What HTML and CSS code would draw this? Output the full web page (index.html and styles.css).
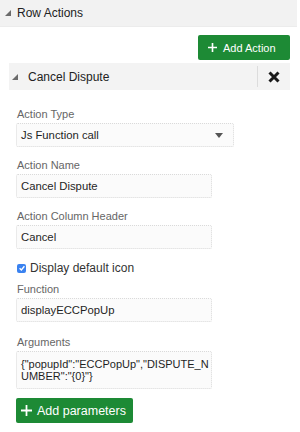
FILE: index.html
```html
<!DOCTYPE html>
<html>
<head>
<meta charset="utf-8">
<link rel="stylesheet" href="styles.css">
</head>
<body>
<div class="panel">
  <div class="section-header">
    <span class="tri"></span>
    <span class="section-title">Row Actions</span>
  </div>
  <div class="toolbar">
    <button class="btn btn-add-action"><svg class="plus" viewBox="0 0 10 10" width="9" height="9"><path d="M5 0V10M0 5H10" stroke="#fff" stroke-width="1.8"/></svg>Add Action</button>
  </div>
  <div class="item-header">
    <span class="tri"></span>
    <span class="item-title">Cancel Dispute</span>
    <span class="spacer"></span>
    <span class="close"><svg viewBox="0 0 12 12" width="12" height="12"><path d="M1.5 1.5L10.5 10.5M10.5 1.5L1.5 10.5" stroke="#1a1a1a" stroke-width="3" stroke-linecap="butt"/></svg></span>
  </div>
  <div class="form">
    <div class="field">
      <div class="label">Action Type</div>
      <div class="box select"><span>Js Function call</span><span class="caret"></span></div>
    </div>
    <div class="field">
      <div class="label">Action Name</div>
      <div class="box input">Cancel Dispute</div>
    </div>
    <div class="field">
      <div class="label">Action Column Header</div>
      <div class="box input">Cancel</div>
    </div>
    <div class="check-row">
      <span class="checkbox"><svg viewBox="0 0 10 10" width="8" height="8"><path d="M2 5.2L4.2 7.4L8 2.8" stroke="#fff" stroke-width="1.7" fill="none"/></svg></span>
      <span class="check-label">Display default icon</span>
    </div>
    <div class="field field-function">
      <div class="label">Function</div>
      <div class="box input">displayECCPopUp</div>
    </div>
    <div class="field">
      <div class="label">Arguments</div>
      <div class="box textarea">{"popupId":"ECCPopUp","DISPUTE_NUMBER":"{0}"}</div>
    </div>
    <div class="btn-row">
      <button class="btn btn-params"><svg class="plus" viewBox="0 0 10 10" width="11" height="11"><path d="M5 0V10M0 5H10" stroke="#fff" stroke-width="1.6"/></svg>Add parameters</button>
    </div>
  </div>
</div>
</body>
</html>
```

FILE: styles.css
```css
html, body {
  margin: 0;
  padding: 0;
  background: #ffffff;
}
body {
  font-family: "Liberation Sans", Arial, Helvetica, sans-serif;
  color: #1f1f1f;
  width: 300px;
  height: 432px;
  overflow: hidden;
}
.panel {
  display: flex;
  flex-direction: column;
}
.section-header {
  display: flex;
  align-items: center;
  height: 27px;
  width: 297px;
  box-sizing: border-box;
  padding-left: 5px;
  background: #f2f2f2;
  border-bottom: 1px solid #ececec;
}
.tri {
  width: 0;
  height: 0;
  border-left: 6px solid transparent;
  border-bottom: 6px solid #6b6b6b;
  margin-right: 6px;
}
.section-title {
  font-size: 12px;
  color: #222;
}
.toolbar {
  display: flex;
  justify-content: flex-end;
  padding-right: 10px;
  margin-top: 8px;
}
.btn {
  display: flex;
  align-items: center;
  gap: 6px;
  height: 25px;
  border: none;
  border-radius: 2px;
  background: #1d8a35;
  color: #ffffff;
  font-family: "Liberation Sans", Arial, Helvetica, sans-serif;
  cursor: pointer;
}
.btn-add-action {
  width: 92px;
  padding: 0 0 0 10px;
  font-size: 11px;
}
.item-header {
  display: flex;
  align-items: center;
  height: 27px;
  margin: 3px 10px 0 9px;
  padding-left: 3px;
  background: #f3f3f3;
}
.item-header .tri {
  margin-right: 10px;
}
.item-title {
  font-size: 12px;
  color: #222;
}
.spacer {
  flex: 1;
}
.close {
  display: flex;
  align-items: center;
  justify-content: center;
  width: 32px;
  height: 21px;
  border-left: 1px solid #dcdcdc;
}
.form {
  display: flex;
  flex-direction: column;
  padding: 17px 0 0 16px;
}
.field {
  display: flex;
  flex-direction: column;
  margin-bottom: 11px;
}
.field-function {
  margin-bottom: 13px;
}
.label {
  font-size: 11px;
  line-height: 14px;
  color: #666;
  margin-bottom: 2px;
  padding-left: 1px;
}
.box {
  box-sizing: border-box;
  border: 1px dotted #dadada;
  border-radius: 2px;
  background: #fbfbfb;
  font-size: 11.3px;
  color: #1f1f1f;
  padding: 0 4px;
}
.select {
  width: 218px;
  height: 24px;
  display: flex;
  align-items: center;
  justify-content: space-between;
}
.caret {
  width: 0;
  height: 0;
  border-left: 4px solid transparent;
  border-right: 4px solid transparent;
  border-top: 5px solid #555;
  margin-right: 6px;
}
.input {
  width: 196px;
  height: 24px;
  display: flex;
  align-items: center;
}
.textarea {
  width: 196px;
  height: 38px;
  padding: 6px 0 0 4px;
  font-size: 11px;
  line-height: 12px;
  word-break: break-all;
}
.check-row {
  display: flex;
  align-items: center;
  height: 14px;
  margin: 1px 0 7px 1px;
}
.checkbox {
  display: flex;
  align-items: center;
  justify-content: center;
  width: 9px;
  height: 9px;
  border-radius: 2px;
  background: #3a82f0;
  margin-right: 4px;
}
.check-label {
  font-size: 12px;
  color: #333;
}
.btn-row {
  display: flex;
  margin-top: -2px;
}
.btn-params {
  width: 117px;
  padding: 0 0 0 5px;
  gap: 5px;
  font-size: 12.5px;
}
```
